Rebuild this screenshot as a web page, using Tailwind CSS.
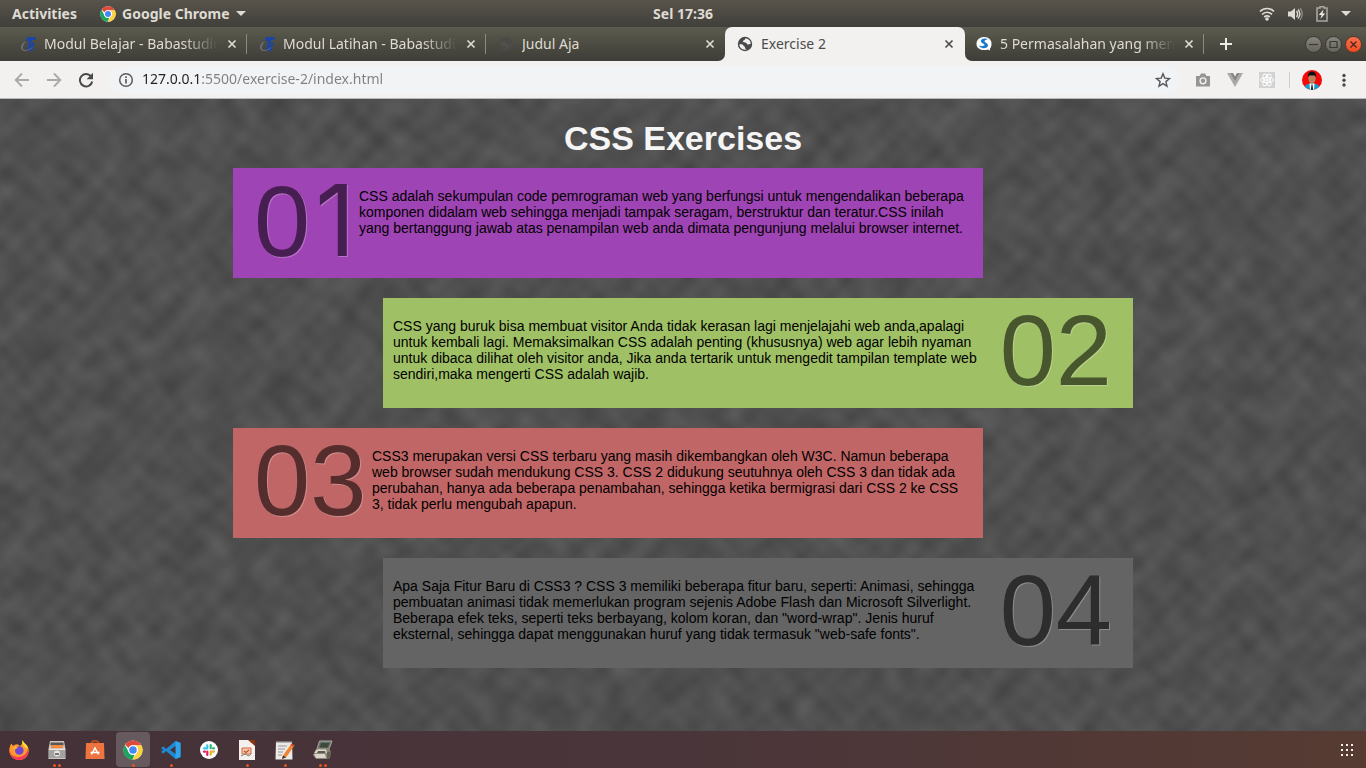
<!DOCTYPE html>
<html lang="id">
<head>
<meta charset="utf-8">
<title>Exercise 2</title>
<script src="https://cdn.jsdelivr.net/npm/@tailwindcss/browser@4"></script>
</head>
<body class="flex h-screen flex-col overflow-hidden bg-[#4f4f4f] font-['Noto_Sans',sans-serif]">

<svg class="absolute size-0" aria-hidden="true">
  <defs>
    <symbol id="close" viewBox="0 0 10 10"><path d="M1.5 1.5l7 7M8.5 1.5l-7 7" fill="none" stroke="currentColor" stroke-width="1.7"/></symbol>
    <symbol id="chrome" viewBox="0 0 48 48">
      <circle cx="24" cy="24" r="23" fill="#fff"/>
      <path d="M24 1a23 23 0 0 1 20 11.5H24a11.5 11.5 0 0 0-10.5 7L5 10.800A23 23 0 0 1 24 1z" fill="#de4a3c"/>
      <path d="M44 12.500A23 23 0 0 1 23 47l10-17.200A11.500 11.500 0 0 0 32 14.500l-1-2z" fill="#fdd23e"/>
      <path d="M23 47A23 23 0 0 1 4.500 11.500L14 29.800a11.500 11.500 0 0 0 14 5z" fill="#1ca45c"/>
      <circle cx="24" cy="24" r="11.500" fill="#fff"/><circle cx="24" cy="24" r="9" fill="#4587f4"/>
    </symbol>
    <symbol id="tlogo" viewBox="0 0 16 16">
      <path d="M7 1h9l-1 3h-3l-2 11H7l2-10H6z" fill="#1b45a8"/><path d="M12.500 6l2 .5-2 8.500h-2z" fill="#1b45a8"/>
      <path d="M6 5C1 7 0 12 2 14c2 2 8 1 12-4-4 3.500-9 5-11 3C2 11 4 8 6 5z" fill="#6b6f78"/>
    </symbol>
  </defs>
</svg>

<!-- Desktop bar -->
<header class="grid h-[27px] shrink-0 grid-cols-3 items-center bg-linear-to-b from-[#58544c] to-[#403f3a] px-3 text-sm font-bold text-[#dfdbd2]">
  <div class="flex items-center gap-[23px] whitespace-nowrap">
    <button>Activities</button>
    <button class="flex items-center gap-[6px]">
      <svg class="size-4"><use href="#chrome"/></svg>Google Chrome
      <svg class="h-[5px] w-[10px]" viewBox="0 0 10 5"><path d="M0 0h10L5 5z" fill="currentColor"/></svg>
    </button>
  </div>
  <time class="justify-self-center">Sel 17:36</time>
  <div class="flex items-center justify-end gap-[12px] pr-[3px]">
    <svg class="h-[14px] w-[16px]" viewBox="0 0 16 14" fill="none" stroke="#dfdbd2" stroke-width="1.700"><path d="M1 4.500c4-4 10-4 14 0M3 7.500c3-3 7-3 10 0M5.200 10c2-1.700 3.600-1.700 5.600 0"/><circle cx="8" cy="12" r="1.800" fill="#dfdbd2" stroke="none"/></svg>
    <svg class="h-[14px] w-[16px]" viewBox="0 0 16 14"><path d="M1 4.500h3L8 1v12L4 9.500H1z" fill="#dfdbd2"/><path d="M9.500 4c1.500 2 1.500 4 0 6M11 2.500c2.500 3 2.500 6 0 9" fill="none" stroke="#dfdbd2" stroke-width="1.400"/><path d="M13 1c3 4 3 8 0 12" fill="none" stroke="#8b8981" stroke-width="1.400"/></svg>
    <svg class="mx-px h-4 w-3" viewBox="0 0 12 16"><path d="M1 2h3V.8h4V2h3v13H1z" fill="none" stroke="#a9a69e" stroke-width="1.600"/><path d="M7.500 3.500L2.800 9h2.800l-1.200 4L9.200 7.500H6.500z" fill="#eeebe4"/></svg>
    <svg class="h-[5px] w-[10px]" viewBox="0 0 10 5"><path d="M0 0h10L5 5z" fill="currentColor"/></svg>
  </div>
</header>

<!-- Browser tabs -->
<nav class="flex h-[34px] shrink-0 items-stretch bg-linear-to-b from-[#5b5b4e] to-[#3e3d38] pl-2 text-sm text-[#dfdbd2]">
  <div class="flex w-[239px] items-center pl-3">
    <svg class="mr-2 size-4 shrink-0"><use href="#tlogo"/></svg>
    <button class="flex-1 overflow-hidden whitespace-nowrap text-left [mask-image:linear-gradient(to_right,black_80%,transparent)]">Modul Belajar - Babastudio</button>
    <button aria-label="Tutup" class="mx-2 flex size-3 items-center justify-center"><svg class="size-[10px]"><use href="#close"/></svg></button>
    <span class="h-5 w-px bg-[#8c8a80]"></span>
  </div>
  <div class="flex w-[239px] items-center pl-3">
    <svg class="mr-2 size-4 shrink-0"><use href="#tlogo"/></svg>
    <button class="flex-1 overflow-hidden whitespace-nowrap text-left [mask-image:linear-gradient(to_right,black_80%,transparent)]">Modul Latihan - Babastudio</button>
    <button aria-label="Tutup" class="mx-2 flex size-3 items-center justify-center"><svg class="size-[10px]"><use href="#close"/></svg></button>
    <span class="h-5 w-px bg-[#8c8a80]"></span>
  </div>
  <div class="flex w-[239px] bg-[#f2f1f0]">
    <div class="flex w-full items-center rounded-br-[7px] bg-linear-to-b from-[#5b5b4e] to-[#3e3d38] pl-3 pr-[9px]">
      <svg class="mr-2 size-4 shrink-0" viewBox="0 0 16 16"><circle cx="8" cy="8" r="7" fill="#4b4a47"/><path d="M3 6l4-1 1 3 4 1-3 4-2-3-4-1z" fill="#52514b"/></svg>
      <button class="flex-1 overflow-hidden whitespace-nowrap text-left">Judul Aja</button>
      <button aria-label="Tutup" class="ml-2 flex size-3 items-center justify-center"><svg class="size-[10px]"><use href="#close"/></svg></button>
    </div>
  </div>
  <div class="flex w-[240px] items-center rounded-t-[7px] bg-[#f2f1f0] pl-3 pr-[10px] text-[#4c4c4c]">
    <svg class="mr-2 size-4 shrink-0" viewBox="0 0 16 16"><circle cx="8" cy="8" r="7.200" fill="#4a4a4a"/><path d="M2.300 8.500c2-.5 3.700 0 4.200 1.200.4 1 1.500.6 1.500 1.800 0 1 .5 1.500 1.500 2C6 14.500 2.500 12 2.300 8.500zM8 2.500c1 .8-.5 1.500-1.500 2C5 5.500 7 6.500 8.500 6.500c1.500.2 1 2 2.500 2 1.300 0 1.500-.8 2.700-.5C13.800 4.800 11.500 2.300 8 2.500z" fill="#f2f1f0"/></svg>
    <button class="flex-1 overflow-hidden whitespace-nowrap text-left">Exercise 2</button>
    <button aria-label="Tutup" class="ml-2 flex size-3 items-center justify-center"><svg class="size-[10px]"><use href="#close"/></svg></button>
  </div>
  <div class="flex w-[239px] bg-[#f2f1f0]">
    <div class="flex w-full items-center rounded-bl-[7px] bg-linear-to-b from-[#5b5b4e] to-[#3e3d38] pl-[11px]">
      <svg class="mr-2 size-4 shrink-0" viewBox="0 0 16 16"><path d="M8 1c5 0 7.500 3 7.500 6.500 0 2.500-.5 4-1.500 5v2l-2-1C7 15 .5 13.500.5 8 .5 4 3.500 1 8 1z" fill="#fff"/><path d="M12 3C8 1.500 4.500 3 5 5.500c.5 2 3.500 2 3.500 3.500S5.500 10.500 3 9.500C4.500 13 11.500 13 12 9.500 12.200 7 8.500 6.500 8.500 5.200S10.500 4 12 3z" fill="#1878d0"/></svg>
      <button class="flex-1 overflow-hidden whitespace-nowrap text-left [mask-image:linear-gradient(to_right,black_80%,transparent)]">5 Permasalahan yang mendasar</button>
      <button aria-label="Tutup" class="mx-2 flex size-3 items-center justify-center"><svg class="size-[10px]"><use href="#close"/></svg></button>
      <span class="h-5 w-px bg-[#8c8a80]"></span>
    </div>
  </div>
  <button aria-label="Tab baru" class="ml-4 self-center"><svg class="size-3" viewBox="0 0 12 12"><path d="M6 0v12M0 6h12" stroke="#eeebe4" stroke-width="2"/></svg></button>
  <div class="ml-auto flex items-center gap-[3px] pr-1">
    <button aria-label="Minimalkan" class="flex size-[17px] items-center justify-center rounded-full border border-[#393834] bg-linear-to-b from-[#87857c] to-[#65635c]"><svg class="size-[9px]" viewBox="0 0 9 9"><path d="M0 4.500h9" stroke="#3a3935" stroke-width="1.200"/></svg></button>
    <button aria-label="Maksimalkan" class="flex size-[17px] items-center justify-center rounded-full border border-[#393834] bg-linear-to-b from-[#87857c] to-[#65635c]"><svg class="size-[9px]" viewBox="0 0 9 9"><path d="M1 1.500h7v6H1z" fill="none" stroke="#3a3935" stroke-width="1.200"/></svg></button>
    <button aria-label="Tutup jendela" class="flex size-[17px] items-center justify-center rounded-full border border-[#57362a] bg-linear-to-b from-[#f8714d] to-[#ee4a1c]"><svg class="size-[9px]" viewBox="0 0 9 9"><path d="M1.500 1.500l6 6M7.500 1.500l-6 6" stroke="#40261c" stroke-width="1.200"/></svg></button>
  </div>
</nav>

<!-- Browser toolbar -->
<div class="flex h-[38px] shrink-0 items-center border-b border-[#b9b9b8] bg-[#f2f1f0] px-[14px]">
  <div class="flex items-center gap-4">
    <button aria-label="Kembali"><svg class="block size-4" viewBox="0 0 16 16"><path d="M15 8H2M8 1.500L1.700 8 8 14.500" fill="none" stroke="#aaa9a8" stroke-width="1.800"/></svg></button>
    <button aria-label="Maju"><svg class="block size-4" viewBox="0 0 16 16"><path d="M1 8h13M8 1.500L14.300 8 8 14.500" fill="none" stroke="#aaa9a8" stroke-width="1.800"/></svg></button>
    <button aria-label="Muat ulang"><svg class="block size-4" viewBox="0 0 16 16"><path d="M13.300 4.800A6.200 6.200 0 1 0 14.200 9.500" fill="none" stroke="#4a4a4a" stroke-width="2"/><path d="M15 .8v6.400H8.600z" fill="#4a4a4a"/></svg></button>
  </div>
  <form class="ml-[14px] flex h-7 flex-1 items-center rounded-full bg-[#f1f3f4] px-[10px]">
    <svg class="size-4" viewBox="0 0 16 16"><circle cx="8" cy="8" r="6.300" fill="none" stroke="#5a5d61" stroke-width="1.500"/><path d="M8 7v4.500M8 4.200v1.700" stroke="#5a5d61" stroke-width="1.700"/></svg>
    <input aria-label="Alamat" value="127.0.0.1:5500/exercise-2/index.html" class="ml-2 min-w-0 flex-1 bg-linear-[to_right,#202124_58px,#7d8083_58px] bg-clip-text pb-px text-sm text-transparent outline-none">
    <button type="button" aria-label="Markah"><svg class="block size-4" viewBox="0 0 16 16"><path d="M8 1.800l1.800 4.300 4.700.4-3.600 3.100 1.100 4.600L8 11.700l-4 2.500 1.100-4.600-3.600-3.100 4.700-.4z" fill="none" stroke="#55585d" stroke-width="1.400"/></svg></button>
  </form>
  <div class="ml-[14px] flex items-center gap-4">
    <button aria-label="Kamera"><svg class="block size-4" viewBox="0 0 16 16"><path d="M1 4h3.500L6 1.500h4L11.500 4H15v10.500H1z" fill="#959595"/><circle cx="8" cy="8.800" r="3.600" fill="#f2f1f0"/><circle cx="8" cy="8.800" r="2.200" fill="#959595"/></svg></button>
    <button aria-label="Vue"><svg class="block size-4" viewBox="0 0 16 16"><path d="M0 1h3.500L8 9l4.500-8H16L8 15z" fill="#aaa"/><path d="M3.300 1H6l2 3.500L10 1h2.700L8 9.500z" fill="#858585"/></svg></button>
    <button aria-label="React"><svg class="block size-4" viewBox="0 0 16 16"><path d="M0 0h16v16H0z" fill="#d2d2d2"/><g fill="none" stroke="#fff"><ellipse cx="8" cy="8" rx="6.500" ry="2.600"/><ellipse cx="8" cy="8" rx="6.500" ry="2.600" transform="rotate(60 8 8)"/><ellipse cx="8" cy="8" rx="6.500" ry="2.600" transform="rotate(120 8 8)"/></g><circle cx="8" cy="8" r="1.400" fill="#fff"/></svg></button>
  </div>
  <span class="ml-[14px] h-4 w-px bg-[#cfcecd]"></span>
  <button aria-label="Profil" class="ml-3"><svg class="block size-5" viewBox="0 0 20 20"><clipPath id="av"><circle cx="10" cy="10" r="10"/></clipPath><g clip-path="url(#av)"><path d="M0 0h20v20H0z" fill="#f60808"/><path d="M2 20c0-5 3-6.500 8-6.500s8 1.500 8 6.500z" fill="#159bd2"/><path d="M7.500 13.500h5L12 20H8z" fill="#fff"/><path d="M9.500 14.500h1l.5 5.500H9z" fill="#111"/><ellipse cx="10" cy="8.500" rx="3.700" ry="5" fill="#b9825c"/><path d="M5.800 7.500C5.500 3 7.500 1.500 10 1.500s4.500 1.500 4.200 6L13 5.500H7z" fill="#111"/></g></svg></button>
  <button aria-label="Menu" class="ml-[14px]"><svg class="block size-4" viewBox="0 0 16 16" fill="#4a4a4a"><circle cx="8" cy="3.500" r="1.700"/><circle cx="8" cy="8.200" r="1.700"/><circle cx="8" cy="13" r="1.700"/></svg></button>
</div>

<!-- Page -->
<main class="relative flex-1 overflow-hidden font-['Liberation_Sans',Arial,sans-serif]">
  <!-- Woven grey backdrop: two stretched noises crossed, turned to the diagonal -->
  <svg class="absolute -left-[117px] -top-[484px] size-[1600px] rotate-45" aria-hidden="true">
    <filter id="weave" x="0" y="0" width="100%" height="100%" color-interpolation-filters="sRGB">
      <feTurbulence type="fractalNoise" baseFrequency="0.025 0.07" numOctaves="1" seed="4"/>
      <feColorMatrix values="1 0 0 0 0  1 0 0 0 0  1 0 0 0 0  0 0 0 0 1" result="a"/>
      <feTurbulence type="fractalNoise" baseFrequency="0.07 0.025" numOctaves="1" seed="9"/>
      <feColorMatrix values="1 0 0 0 0  1 0 0 0 0  1 0 0 0 0  0 0 0 0 1" result="b"/>
      <feComposite in="a" in2="b" operator="arithmetic" k2="0.5" k3="0.5"/>
      <feColorMatrix values="0.190 0 0 0 0.218  0 0.190 0 0 0.218  0 0 0.190 0 0.218  0 0 0 0 1"/>
    </filter>
    <rect width="1600" height="1600" filter="url(#weave)"/>
  </svg>
  <div class="relative mx-auto flex max-w-[900px] flex-col gap-5 pt-5 text-sm/4 text-black">
    <h1 class="-mb-[10px] text-center text-[34px]/[39px] font-bold text-[#f5f5f5]">CSS Exercises</h1>
    <section class="flex h-[110px] w-[750px] max-w-full bg-[#9f44b4] pl-[21px] pr-[15px]">
      <div class="flex w-[105px] shrink-0 items-baseline gap-[5px] text-[101px]/[104px] text-[#471e51] [text-shadow:1px_1px_0_#ffffff40]"><span>0</span><span class="font-['Inter'] text-[99px]/[104px]">1</span></div>
      <p class="pt-5">CSS adalah sekumpulan code pemrograman web yang berfungsi untuk mengendalikan beberapa komponen didalam web sehingga menjadi tampak seragam, berstruktur dan teratur.CSS inilah yang bertanggung jawab atas penampilan web anda dimata pengunjung melalui browser internet.</p>
    </section>
    <section class="flex h-[110px] w-[750px] max-w-full justify-between self-end bg-[#a0c066] pl-[10px] pr-[21px]">
      <p class="w-[590px] pt-5">CSS yang buruk bisa membuat visitor Anda tidak kerasan lagi menjelajahi web anda,apalagi untuk kembali lagi. Memaksimalkan CSS adalah penting (khususnya) web agar lebih nyaman untuk dibaca dilihat oleh visitor anda, Jika anda tertarik untuk mengedit tampilan template web sendiri,maka mengerti CSS adalah wajib.</p>
      <div class="shrink-0 text-[101px]/[104px] text-[#48562d] [text-shadow:1px_1px_0_#ffffff40]">02</div>
    </section>
    <section class="flex h-[110px] w-[750px] max-w-full bg-[#c06666] pl-[21px] pr-[15px]">
      <div class="w-[118px] shrink-0 text-[101px]/[104px] text-[#562d2d] [text-shadow:1px_1px_0_#ffffff40]">03</div>
      <p class="pt-5">CSS3 merupakan versi CSS terbaru yang masih dikembangkan oleh W3C. Namun beberapa web browser sudah mendukung CSS 3. CSS 2 didukung seutuhnya oleh CSS 3 dan tidak ada perubahan, hanya ada beberapa penambahan, sehingga ketika bermigrasi dari CSS 2 ke CSS 3, tidak perlu mengubah apapun.</p>
    </section>
    <section class="flex h-[110px] w-[750px] max-w-full justify-between self-end bg-[#646464] pl-[10px] pr-[21px]">
      <p class="w-[590px] pt-5">Apa Saja Fitur Baru di CSS3 ? CSS 3 memiliki beberapa fitur baru, seperti: Animasi, sehingga pembuatan animasi tidak memerlukan program sejenis Adobe Flash dan Microsoft Silverlight. Beberapa efek teks, seperti teks berbayang, kolom koran, dan "word-wrap". Jenis huruf eksternal, sehingga dapat menggunakan huruf yang tidak termasuk "web-safe fonts".</p>
      <div class="shrink-0 text-[101px]/[104px] text-[#2d2d2d] [text-shadow:1px_1px_0_#ffffff40]">04</div>
    </section>
  </div>
</main>

<!-- Dock -->
<footer class="flex h-[37px] shrink-0 items-center gap-1 bg-linear-to-r from-[#443238] via-[#4a353a] to-[#563b32] pl-[2px] pr-3">
  <button aria-label="Firefox" class="flex h-[35px] w-[34px] items-center justify-center"><svg class="size-5" viewBox="0 0 20 20"><path d="M13.500 0c.5 2 2 3 3.500 4.500C19 6.500 20 9 19.700 11.500 19 16.500 15 20 10 20S.5 16 .3 11C.2 8 1 5.500 2.500 3.500L4 6c1-1 2-1.500 3.500-1.500C9 3.500 9.500 5 11 6c1.500-1 3-3 2.500-6z" fill="#ff9a2a"/><path d="M.5 9C1 15 5 17 9 17c5 0 9-3 10-8 1.500 7-4 11-9 11S.3 16 .5 9z" fill="#f7395b"/><path d="M13.500 0c.5 2 2 3 3.500 4.500 1 1.200 1.800 2.500 2 4l-3-1c-1-2-3.500-3-2.500-7.500z" fill="#ffdf3d"/><circle cx="10.300" cy="10.500" r="4.300" fill="#6f45d8"/><path d="M4 7c2-1 4-.5 5 1-1.500 0-2 1-3.500 1.500z" fill="#ffb52e"/></svg></button>
  <button aria-label="Berkas" class="relative flex h-[35px] w-[34px] items-center justify-center"><svg class="size-5" viewBox="0 0 20 20"><path d="M3 1h14l1.500 8v10h-17V9z" fill="#c9c7c3"/><path d="M3.500 2.500h13v3h-13z" fill="#5a5752"/><path d="M4 5h12v5H4z" fill="#f08b43"/><path d="M2 8.500h16V18H2z" fill="#a3a29f"/><path d="M2 8.500h16v1.500H2z" fill="#e8e6e2"/><circle cx="10" cy="13.500" r="3" fill="#e6e5e3"/><path d="M8 13h4v2H8z" fill="#777"/></svg><span class="absolute bottom-0 flex gap-[2px]"><i class="size-[3px] rounded-full bg-[#e95420]"></i><i class="size-[3px] rounded-full bg-[#e95420]"></i></span></button>
  <button aria-label="Perangkat lunak" class="flex h-[35px] w-[34px] items-center justify-center"><svg class="size-5" viewBox="0 0 20 20"><path d="M6.500 5V3.500C6.500 0 13.500 0 13.500 3.500V5" fill="none" stroke="#b04a20" stroke-width="2"/><path d="M1 3h18l.5 16H.5z" fill="#ed7440"/><path d="M6.500 14.500L10 8l3.500 6.500M5.500 12.500h9" fill="none" stroke="#fff" stroke-width="1.500"/></svg></button>
  <button aria-label="Google Chrome" class="relative flex h-[35px] w-[34px] items-center justify-center rounded bg-[#675a5e]"><svg class="size-5"><use href="#chrome"/></svg><i class="absolute bottom-0 size-[3px] rounded-full bg-[#e95420]"></i></button>
  <button aria-label="Visual Studio Code" class="relative flex h-[35px] w-[34px] items-center justify-center"><svg class="size-5" viewBox="0 0 20 20"><path d="M14.500 1L19.500 3v14l-5 2L5 11 2.500 13.500.500 12.500v-5l2-1L5 9z" fill="#1f8ad2"/><path d="M14.500 1v18l5-2V3z" fill="#2fa5ee"/><path d="M14.500 6v8L9 10z" fill="#46333a"/><path d="M.5 8.500v3L2.500 10z" fill="#46333a"/></svg><i class="absolute bottom-0 size-[3px] rounded-full bg-[#e95420]"></i></button>
  <button aria-label="Slack" class="flex h-[35px] w-[34px] items-center justify-center"><svg class="size-5" viewBox="0 0 20 20"><circle cx="10" cy="10" r="9" fill="#fff"/><g fill="none" stroke-width="2.200" stroke-linecap="round"><path d="M8.300 5.300v3M5 8.300h3.300" stroke="#36c5f0"/><path d="M11.700 5v3.300M15 8.300h-1" stroke="#2eb67d"/><path d="M11.700 14.700v-3M15 11.700h-3" stroke="#ecb22e"/><path d="M8.300 15v-3.300M5 11.700h1" stroke="#e01e5a"/></g></svg></button>
  <button aria-label="Impress" class="relative flex h-[35px] w-[34px] items-center justify-center"><svg class="size-5" viewBox="0 0 20 20"><path d="M2 0h10l6 5v15H2z" fill="#f3f0ed"/><path d="M11 0h7v6z" fill="#8c3410"/><path d="M5 8h9v6H5z" fill="#f4c9b4" stroke="#d3693c"/><path d="M4 16l4-2 4 2 2-2" fill="none" stroke="#8a8480"/><path d="M7 11l2 1.500L12 10" fill="none" stroke="#c3501f" stroke-width="1.300"/></svg><i class="absolute bottom-0 size-[3px] rounded-full bg-[#e95420]"></i></button>
  <button aria-label="Editor teks" class="relative flex h-[35px] w-[34px] items-center justify-center"><svg class="size-5" viewBox="0 0 20 20"><path d="M1 1h16l.5 18.500H.5z" fill="#eceae6"/><path d="M1 1h16v1.500H1z" fill="#777" /><path d="M3 6h9M3 9h7M3 12h5M3 15h4" stroke="#999"/><path d="M8 15.500L16.500 3.500l3 2L11 17.500l-4 1.500z" fill="#f08533"/><path d="M16.500 3.500l3 2-1 1.500-3-2z" fill="#d0453b"/><path d="M8 15.500l3 2L7 19z" fill="#3c3835"/></svg><i class="absolute bottom-0 size-[3px] rounded-full bg-[#e95420]"></i></button>
  <button aria-label="Pemindai" class="relative flex h-[35px] w-[34px] items-center justify-center"><svg class="size-5" viewBox="0 0 20 20"><path d="M6.500 1H19l-3 8H4z" fill="#69706a" stroke="#a8aaa2"/><path d="M8 3h8.500l-2 4.500H6.500z" fill="#3c4a3c"/><path d="M3 9c2-2 4-1 6-1h7l2 4-1 6-3 1H3l-3-4z" fill="#8d8878"/><path d="M1.500 13C3 8.500 6 9 8 9.500h5l1 3.500z" fill="#ddd8ca"/><path d="M5 11h7l.5 2H4z" fill="#5d5a50"/><path d="M1 14h11l1 4H3z" fill="#dbd6c8"/><path d="M14 12l4-1-1 6-3 2z" fill="#625f54"/></svg><span class="absolute bottom-0 flex gap-[2px]"><i class="size-[3px] rounded-full bg-[#e95420]"></i><i class="size-[3px] rounded-full bg-[#e95420]"></i></span></button>
  <button aria-label="Tampilkan aplikasi" class="ml-auto"><svg class="block size-[14px]" viewBox="0 0 14 14" fill="#f4f1ee"><path d="M1 1h2v2H1zM6 1h2v2H6zM11 1h2v2h-2zM1 6h2v2H1zM6 6h2v2H6zM11 6h2v2h-2zM1 11h2v2H1zM6 11h2v2H6zM11 11h2v2h-2z"/></svg></button>
</footer>
</body>
</html>
